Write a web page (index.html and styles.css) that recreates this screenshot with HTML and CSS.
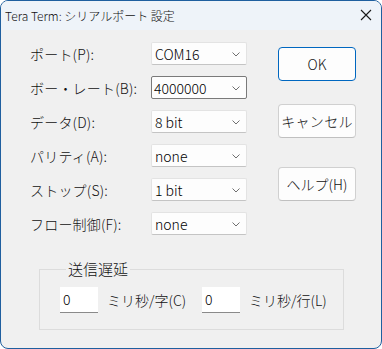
FILE: index.html
```html
<!DOCTYPE html>
<html>
<head>
    <title>Tera Term: シリアルポート 設定</title>
    <meta charset="utf-8">
    <link rel="stylesheet" href="styles.css">
</head>
<body>

<div class="window">
    <div class="titlebar">
        <span class="title">Tera Term: シリアルポート 設定</span>
        <svg class="close" width="12" height="12" viewBox="0 0 12 12">
            <path d="M1 1 L11 11 M11 1 L1 11" stroke="#1a1a1a" stroke-width="1.1" fill="none"/>
        </svg>
    </div>

    <div class="content">
        <div class="top">
            <div class="form">
                <label>ポート(P):</label>
                <div class="combo"><span>COM16</span><svg width="8" height="5" viewBox="0 0 8 5"><path d="M0.5 0.5 L4 4 L7.5 0.5" stroke="#707070" fill="none"/></svg></div>

                <label>ボー・レート(B):</label>
                <div class="combo focus"><span>4000000</span><svg width="8" height="5" viewBox="0 0 8 5"><path d="M0.5 0.5 L4 4 L7.5 0.5" stroke="#707070" fill="none"/></svg></div>

                <label>データ(D):</label>
                <div class="combo"><span>8 bit</span><svg width="8" height="5" viewBox="0 0 8 5"><path d="M0.5 0.5 L4 4 L7.5 0.5" stroke="#707070" fill="none"/></svg></div>

                <label>パリティ(A):</label>
                <div class="combo"><span>none</span><svg width="8" height="5" viewBox="0 0 8 5"><path d="M0.5 0.5 L4 4 L7.5 0.5" stroke="#707070" fill="none"/></svg></div>

                <label>ストップ(S):</label>
                <div class="combo"><span>1 bit</span><svg width="8" height="5" viewBox="0 0 8 5"><path d="M0.5 0.5 L4 4 L7.5 0.5" stroke="#707070" fill="none"/></svg></div>

                <label>フロー制御(F):</label>
                <div class="combo"><span>none</span><svg width="8" height="5" viewBox="0 0 8 5"><path d="M0.5 0.5 L4 4 L7.5 0.5" stroke="#707070" fill="none"/></svg></div>
            </div>

            <div class="buttons">
                <button class="btn default">OK</button>
                <button class="btn cancel">キャンセル</button>
                <button class="btn help">ヘルプ(H)</button>
            </div>
        </div>

        <fieldset class="delay">
            <legend>送信遅延</legend>
            <div class="delay-row">
                <div class="edit">0</div>
                <span class="unit first-unit">ミリ秒/字(C)</span>
                <div class="edit">0</div>
                <span class="unit">ミリ秒/行(L)</span>
            </div>
        </fieldset>
    </div>
</div>

</body>
</html>
```

FILE: styles.css
```css
body, html {
    margin: 0; padding: 0;
    background: #fff;
}
body {
    font-family: "Noto Sans CJK JP", "Noto Sans", sans-serif;
    font-weight: 300;
    color: #000;
}
.window {
    width: 382px;
    height: 349px;
    box-sizing: border-box;
    border: 1px solid #1f5f9f;
    border-radius: 8px;
    overflow: hidden;
    background: #f0f0f0;
    display: flex;
    flex-direction: column;
}
.titlebar {
    height: 29px;
    background: #eef3f9;
    display: flex;
    align-items: center;
    justify-content: space-between;
    padding: 0 9px 0 4px;
    flex: none;
}
.title {
    font-size: 12px;
    line-height: 29px;
    color: #111;
}
.close {
    display: block;
    margin-top: -1px;
}
.content {
    padding: 12px 0 0 29px;
}
.top {
    display: flex;
}
.form {
    display: grid;
    grid-template-columns: 121px 96px;
    grid-auto-rows: 23px;
    row-gap: 11px;
    align-items: center;
}
.form label {
    font-size: 14px;
    white-space: nowrap;
    color: #111;
    letter-spacing: 0.2px;
}
.combo {
    height: 23px;
    box-sizing: border-box;
    background: #fdfdfd;
    border: 1px solid #e3e3e3;
    border-bottom-color: #c4c4c4;
    border-radius: 2px;
    display: flex;
    align-items: center;
    justify-content: space-between;
    padding: 0 6px 0 3px;
    font-size: 14px;
}
.combo.focus {
    border-color: #7a7a7a;
    padding-left: 2px;
}
.combo svg {
    display: block;
    margin-top: 1px;
}
.buttons {
    display: flex;
    flex-direction: column;
    margin-left: 31px;
    padding-top: 5px;
}
.btn {
    width: 78px;
    height: 34px;
    padding: 0;
    margin: 0;
    background: #fdfdfd;
    border: 1px solid #d0d0d0;
    border-bottom-color: #c0c0c0;
    border-radius: 4px;
    font-family: "Noto Sans CJK JP", "Noto Sans", sans-serif;
    font-weight: 300;
    font-size: 14px;
    color: #111;
    white-space: nowrap;
}
.btn.default {
    border: 1px solid #0067c0;
}
.btn.cancel {
    margin-top: 23px;
    letter-spacing: 0.3px;
}
.btn.help {
    margin-top: 29px;
}
.delay {
    margin: 24px 0 0 9px;
    padding: 8px 0 16px 20px;
    width: 305px;
    box-sizing: border-box;
    border: 1px solid #dcdcdc;
    border-radius: 0;
}
.delay legend {
    font-size: 15px;
    line-height: 20px;
    margin-left: 6px;
    padding: 0 2px;
    color: #111;
}
.delay-row {
    display: flex;
    align-items: center;
}
.edit {
    width: 38px;
    height: 26px;
    box-sizing: border-box;
    background: #fff;
    border-bottom: 1px solid #8a8a8a;
    font-size: 14px;
    padding-left: 3px;
    line-height: 24px;
}
.unit {
    font-size: 14px;
    margin-left: 9px;
    white-space: nowrap;
    color: #111;
}
.unit.first-unit {
    width: 86px;
    margin-right: 9px;
}
```
